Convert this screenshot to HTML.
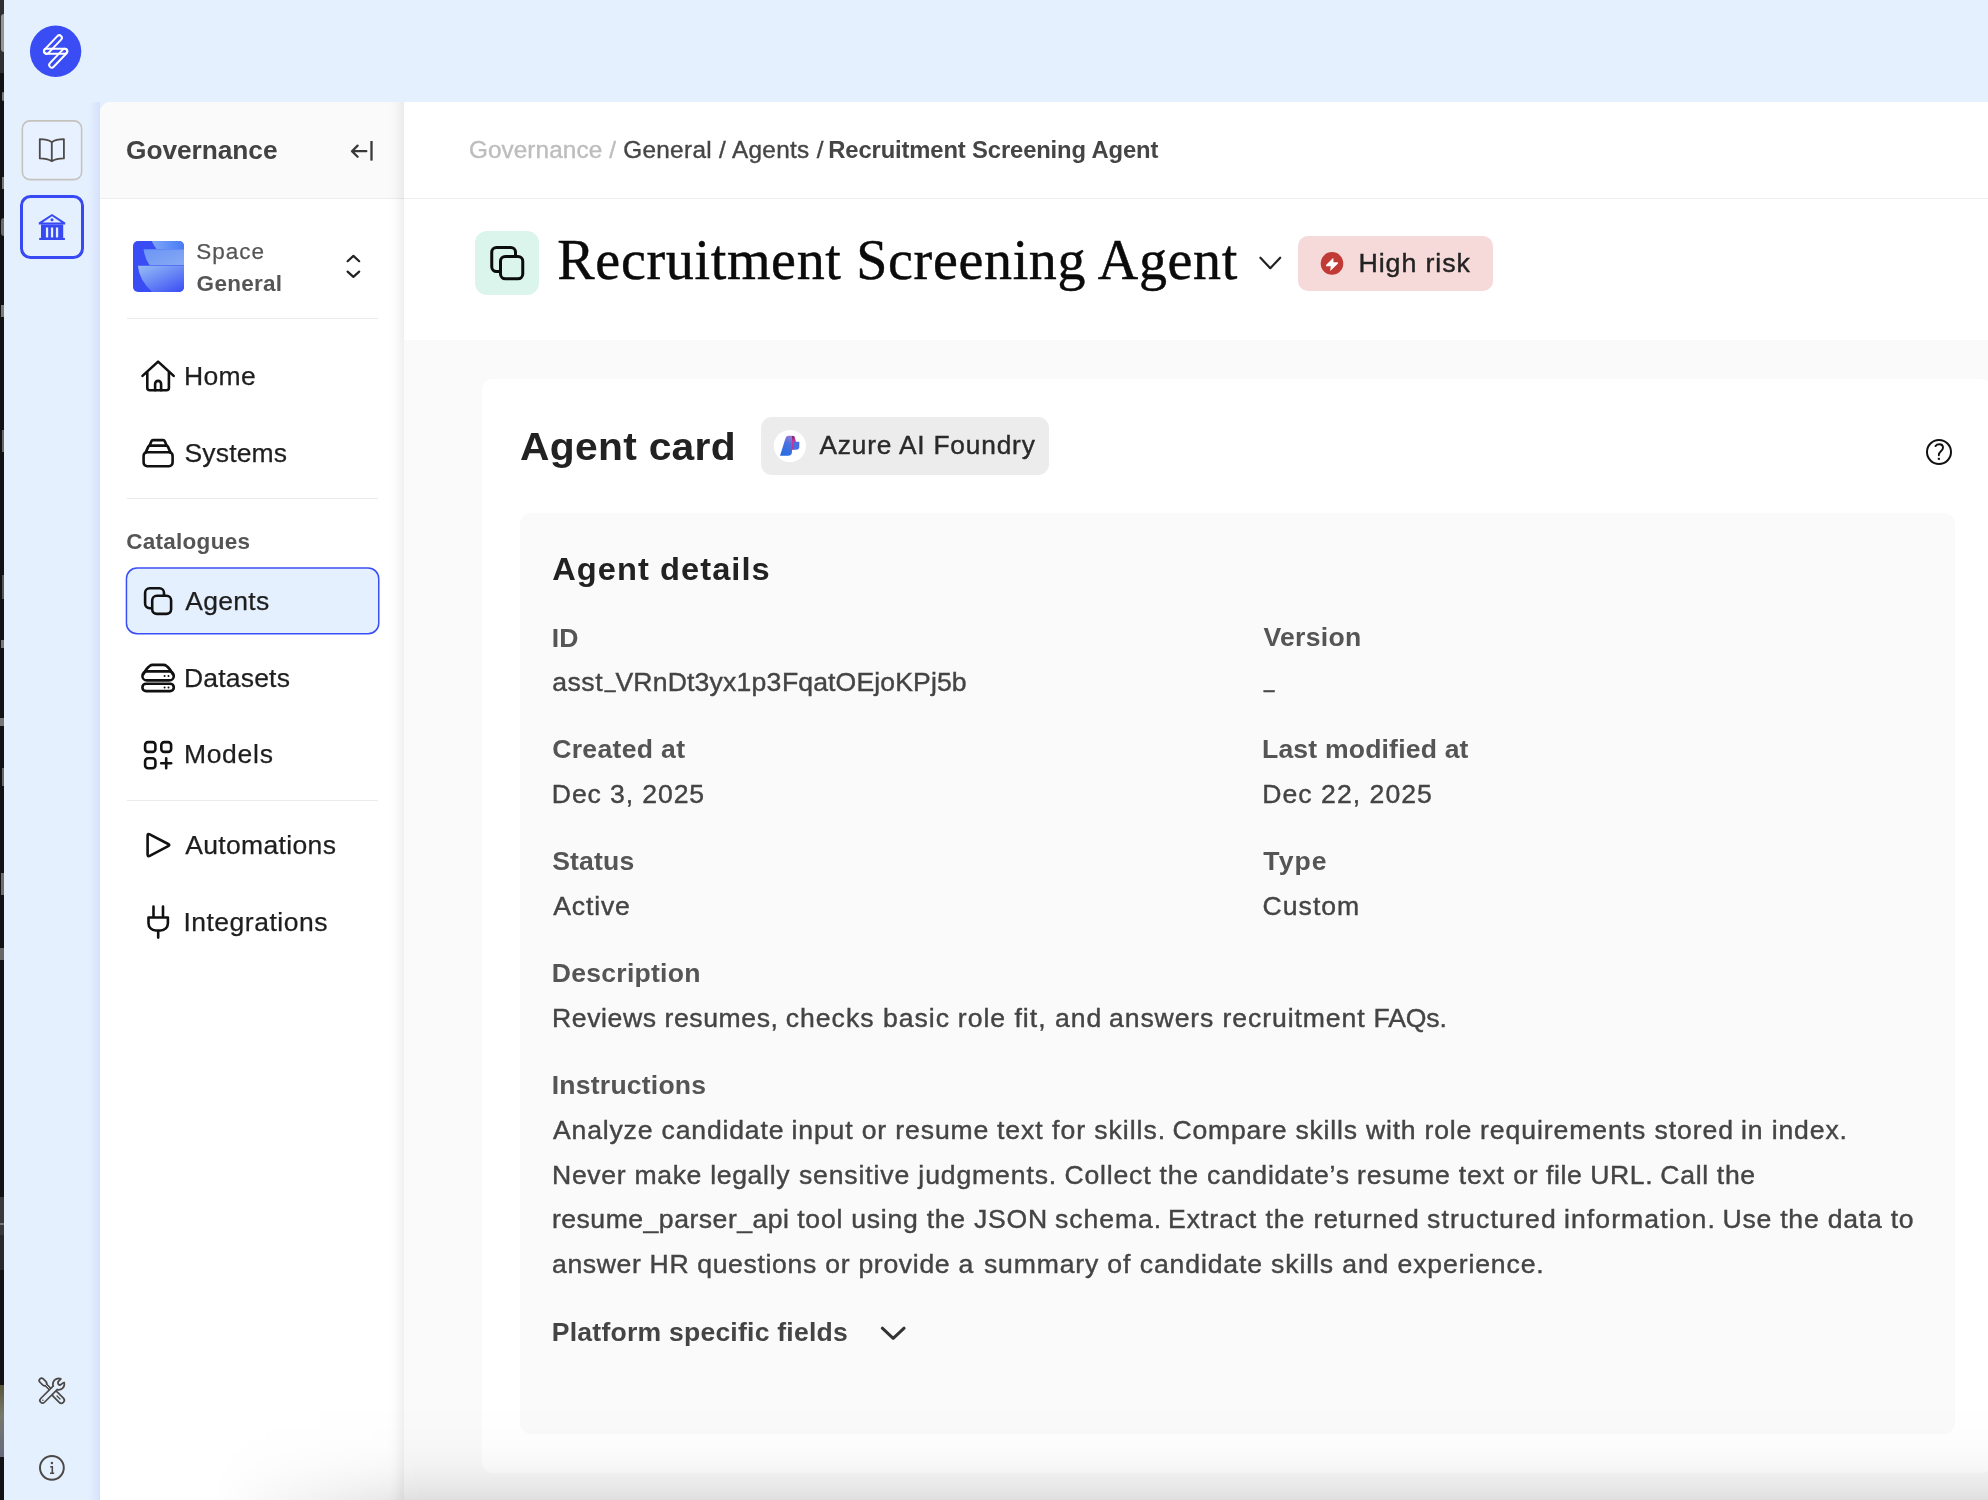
<!DOCTYPE html>
<html lang="en">
<head>
<meta charset="utf-8">
<title>Recruitment Screening Agent</title>
<style>
*{box-sizing:border-box;margin:0;padding:0}
html,body{width:1988px;height:1500px;overflow:hidden}
body{position:relative;background:#e5f0ff;font-family:"Liberation Sans",Arial,sans-serif;color:#444}
.a{position:absolute}
.t{position:absolute;white-space:nowrap;line-height:1;transform-origin:0 0;will-change:transform}
#strip{left:0;top:0;width:4px;height:1500px;background:#121214;overflow:hidden}
#strip i{position:absolute;display:block}
#rb1{left:22px;top:120.5px;width:60px;height:59.5px;border-radius:8px;background:#e7f1ff}
#rb2{left:20px;top:194.8px;width:64px;height:64px;border:3.2px solid #3649f3;border-radius:10.5px}
#pshadow{left:87px;top:102px;width:13px;height:1400px;background:linear-gradient(to right,rgba(116,133,235,0),rgba(116,133,235,.04) 40%,rgba(116,133,235,.14))}
#panel{left:100px;top:102px;width:1900px;height:1420px;background:#fff;border-top-left-radius:11px}
#sbhead{left:100px;top:102px;width:304px;height:97px;background:#fafafa;border-top-left-radius:11px;border-bottom:1px solid #ededed}
#mclip{left:364px;top:102px;width:1640px;height:1420px;overflow:hidden}
#main{left:40px;top:-20px;width:1600px;height:1460px;background:#fafafa;box-shadow:-2px 0 14px rgba(0,0,0,.10)}
#mainhead{left:404px;top:102px;width:1600px;height:237.5px;background:#fff}
#mhline{left:404px;top:198px;width:1600px;height:1px;background:#ededed}
.hr{position:absolute;height:1px;background:#ebebeb;left:127px;width:251px}
#sel{left:126px;top:567.6px;width:253.2px;height:66.6px;background:#e5f0ff;border-radius:11px}
#ticon{left:475px;top:230.8px;width:64.3px;height:64.4px;background:#dbf5ec;border-radius:12px}
#risk{left:1298px;top:236px;width:195px;height:55px;background:#f6dada;border-radius:10px}
#card{left:482px;top:379px;width:1510px;height:1094px;background:#fff;border-radius:11px}
#azure{left:761px;top:417px;width:288px;height:57.5px;background:#ececec;border-radius:11px}
#inner{left:520px;top:513px;width:1434.5px;height:920.5px;background:#fafafa;border-radius:11px}
#bot{left:100px;top:1380px;width:1900px;height:120px;background:linear-gradient(to bottom,rgba(0,0,0,0) 15%,rgba(0,0,0,.004) 37%,rgba(0,0,0,.012) 56%,rgba(0,0,0,.03) 72.5%,rgba(0,0,0,.044) 77.5%,rgba(0,0,0,.072) 89%,rgba(0,0,0,.106) 100%);-webkit-mask-image:linear-gradient(to right,rgba(0,0,0,0) 6%,#000 17%);mask-image:linear-gradient(to right,rgba(0,0,0,0) 6%,#000 17%)}
svg{position:absolute;left:0;top:0}
</style>
</head>
<body>
<div class="a" id="strip">
<i style="left:0;top:0;width:4px;height:73px;background:#2f2f31"></i>
<i style="left:1px;top:14px;width:3px;height:38px;background:#949494;border-radius:3px 0 0 3px"></i>
<i style="left:2px;top:92px;width:2px;height:9px;background:#777;border-radius:2px"></i>
<i style="left:2px;top:177px;width:2px;height:12px;background:#777"></i>
<i style="left:1px;top:218px;width:3px;height:18px;background:#6a6a6a;border-radius:3px 0 0 3px"></i>
<i style="left:1px;top:305px;width:3px;height:12px;background:#7a7a7a"></i>
<i style="left:2px;top:430px;width:2px;height:22px;background:#666"></i>
<i style="left:2px;top:575px;width:2px;height:24px;background:#555"></i>
<i style="left:1px;top:640px;width:3px;height:8px;background:#777"></i>
<i style="left:0;top:718px;width:4px;height:8px;background:#777"></i>
<i style="left:2px;top:768px;width:2px;height:18px;background:#666"></i>
<i style="left:1px;top:873px;width:3px;height:22px;background:#6e6e6e"></i>
<i style="left:0;top:948px;width:4px;height:12px;background:#666"></i>
<i style="left:0;top:1197px;width:4px;height:38px;background:#39393b"></i>
<i style="left:0;top:1223px;width:4px;height:2px;background:#777"></i>
<i style="left:0;top:1235px;width:4px;height:35px;background:#28282a"></i>
<i style="left:0;top:1385px;width:4px;height:72px;background:linear-gradient(#55553a,#77776a 40%,#666a80)"></i>
</div>
<div class="a" id="rb1"></div>
<div class="a" id="rb2"></div>
<div class="a" id="pshadow"></div>
<div class="a" id="panel"></div>
<div class="a" id="sbhead"></div>
<div class="a" id="mclip"><div class="a" id="main"></div></div>
<div class="a" id="mainhead"></div>
<div class="a" id="mhline"></div>
<div class="hr" style="top:318px"></div>
<div class="hr" style="top:498px"></div>
<div class="hr" style="top:800px"></div>
<div class="a" id="sel"></div>
<div class="a" id="ticon"></div>
<div class="a" id="risk"></div>
<div class="a" id="card"></div>
<div class="a" id="azure"></div>
<div class="a" id="inner"></div>
<div class="t" id="gov" style="left:126px;padding-left:0.1px;top:136.9px;font-size:26.3px;color:#424242;letter-spacing:-0.063px;font-weight:700">Governance</div>
<div class="t" id="space" style="left:196px;padding-left:0.3px;top:240.6px;font-size:22.5px;color:#555;letter-spacing:0.96px;-webkit-text-stroke:0.25px #555">Space</div>
<div class="t" id="general" style="left:196px;padding-left:0.61px;top:272.8px;font-size:22.5px;color:#555;letter-spacing:0.274px;font-weight:700">General</div>
<div class="t" id="n-home" style="left:183px;padding-left:0.89px;top:363.0px;font-size:26.5px;color:#1e1e1e;letter-spacing:0.417px;-webkit-text-stroke:0.25px #1e1e1e">Home</div>
<div class="t" id="n-sys" style="left:184px;padding-left:0.47px;top:439.9px;font-size:26.5px;color:#1e1e1e;letter-spacing:0.168px;-webkit-text-stroke:0.25px #1e1e1e">Systems</div>
<div class="t" id="cat" style="left:126px;padding-left:0.32px;top:530.9px;font-size:22.5px;color:#555;letter-spacing:0.258px;font-weight:700">Catalogues</div>
<div class="t" id="n-ag" style="left:185px;padding-left:0.15px;top:588.0px;font-size:26.5px;color:#1e1e1e;letter-spacing:0.336px;-webkit-text-stroke:0.25px #1e1e1e">Agents</div>
<div class="t" id="n-ds" style="left:183px;padding-left:0.89px;top:664.8px;font-size:26.5px;color:#1e1e1e;letter-spacing:0.206px;-webkit-text-stroke:0.25px #1e1e1e">Datasets</div>
<div class="t" id="n-md" style="left:183px;padding-left:0.89px;top:741.0px;font-size:26.5px;color:#1e1e1e;letter-spacing:0.718px;-webkit-text-stroke:0.25px #1e1e1e">Models</div>
<div class="t" id="n-au" style="left:185px;padding-left:0.15px;top:831.9px;font-size:26.5px;color:#1e1e1e;letter-spacing:0.344px;-webkit-text-stroke:0.25px #1e1e1e">Automations</div>
<div class="t" id="n-in" style="left:183px;padding-left:0.39px;top:909.0px;font-size:26.5px;color:#1e1e1e;letter-spacing:0.51px;-webkit-text-stroke:0.25px #1e1e1e">Integrations</div>
<div class="t" id="bc1" style="left:468px;padding-left:0.9px;top:138.3px;font-size:24.3px;color:#bdbdbd;letter-spacing:0.102px;-webkit-text-stroke:0.4px #bdbdbd">Governance /</div>
<div class="t" id="bc2" style="left:623px;padding-left:0.2px;top:138.3px;font-size:24.3px;color:#454545;letter-spacing:0.336px;-webkit-text-stroke:0.4px #454545">General / Agents /</div>
<div class="t" id="bc3" style="left:828px;padding-left:0.31px;top:138.3px;font-size:23.8px;color:#454545;letter-spacing:-0.139px;font-weight:700">Recruitment Screening Agent</div>
<div class="t" id="title" style="left:557px;padding-left:0.35px;top:231.71px;font-size:56px;color:#0b0b0b;letter-spacing:0.674px;-webkit-text-stroke:0.45px #0b0b0b;font-family:'Liberation Serif','Times New Roman',serif">Recruitment Screening Agent</div>
<div class="t" id="risktxt" style="left:1358px;padding-left:0.48px;top:249.6px;font-size:26px;color:#222;letter-spacing:0.879px;transform:scaleX(1.03);-webkit-text-stroke:0.4px #222">High risk</div>
<div class="t" id="acard" style="left:520px;padding-left:0.08px;top:428.4px;font-size:38.5px;color:#222;letter-spacing:0.25px;transform:scaleX(1.06);font-weight:700">Agent card</div>
<div class="t" id="azuretxt" style="left:819px;padding-left:0.46px;top:433.3px;font-size:25.5px;color:#2a2a2a;letter-spacing:0.801px;transform:scaleX(1.03);-webkit-text-stroke:0.4px #2a2a2a">Azure AI Foundry</div>
<div class="t" id="adet" style="left:552px;padding-left:0.14px;top:554.71px;font-size:30.8px;color:#222;letter-spacing:0.994px;transform:scaleX(1.06);font-weight:700">Agent details</div>
<div class="t" id="l-id" style="left:551px;padding-left:0.85px;top:625.6px;font-size:25.8px;color:#555;letter-spacing:-0.076px;transform:scaleX(1.03);font-weight:700">ID</div>
<div class="t" id="v-ida" style="left:552px;padding-left:0.35px;top:669.5px;font-size:25.8px;color:#444;letter-spacing:0.461px;transform:scaleX(1.03);-webkit-text-stroke:0.4px #444">asst</div>
<div class="t" id="v-idu" style="left:604px;padding-left:0.98px;top:666.3px;font-size:25.8px;color:#444;letter-spacing:0.0px;transform:scaleX(0.745);-webkit-text-stroke:0.4px #444">_</div>
<div class="t" id="v-idb" style="left:615px;padding-left:0.46px;top:669.5px;font-size:25.8px;color:#444;letter-spacing:0.172px;transform:scaleX(1.03);-webkit-text-stroke:0.4px #444">VRnDt3yx1p3</div>
<div class="t" id="v-idc" style="left:781px;padding-left:0.92px;top:669.5px;font-size:25.8px;color:#444;letter-spacing:0.126px;transform:scaleX(1.03);-webkit-text-stroke:0.4px #444">FqatOEjoKPj5b</div>
<div class="t" id="l-ver" style="left:1263px;padding-left:0.48px;top:625.4px;font-size:25.8px;color:#555;letter-spacing:0.267px;transform:scaleX(1.03);font-weight:700">Version</div>
<div class="t" id="l-cr" style="left:552px;padding-left:0.18px;top:737.0px;font-size:25.8px;color:#555;letter-spacing:0.315px;transform:scaleX(1.03);font-weight:700">Created at</div>
<div class="t" id="v-cr" style="left:551px;padding-left:0.84px;top:781.5px;font-size:25.8px;color:#444;letter-spacing:0.873px;transform:scaleX(1.03);-webkit-text-stroke:0.4px #444">Dec 3, 2025</div>
<div class="t" id="l-lm" style="left:1262px;padding-left:0.0px;top:737.0px;font-size:25.8px;color:#555;letter-spacing:0.176px;transform:scaleX(1.03);font-weight:700">Last modified at</div>
<div class="t" id="v-lm" style="left:1262px;padding-left:0.28px;top:781.71px;font-size:25.8px;color:#444;letter-spacing:1.014px;transform:scaleX(1.03);-webkit-text-stroke:0.4px #444">Dec 22, 2025</div>
<div class="t" id="l-st" style="left:552px;padding-left:0.17px;top:848.71px;font-size:25.8px;color:#555;letter-spacing:0.158px;transform:scaleX(1.03);font-weight:700">Status</div>
<div class="t" id="v-st" style="left:553px;padding-left:0.22px;top:893.5px;font-size:25.8px;color:#444;letter-spacing:0.831px;transform:scaleX(1.03);-webkit-text-stroke:0.4px #444">Active</div>
<div class="t" id="l-ty" style="left:1263px;padding-left:0.33px;top:848.8px;font-size:25.8px;color:#555;letter-spacing:1.018px;transform:scaleX(1.03);font-weight:700">Type</div>
<div class="t" id="v-ty" style="left:1262px;padding-left:0.56px;top:893.71px;font-size:25.8px;color:#444;letter-spacing:0.999px;transform:scaleX(1.03);-webkit-text-stroke:0.4px #444">Custom</div>
<div class="t" id="l-de" style="left:551px;padding-left:0.77px;top:960.71px;font-size:25.8px;color:#555;letter-spacing:0.241px;transform:scaleX(1.03);font-weight:700">Description</div>
<div class="t" id="l-in" style="left:551px;padding-left:0.77px;top:1072.9px;font-size:25.8px;color:#555;letter-spacing:0.197px;transform:scaleX(1.03);font-weight:700">Instructions</div>
<div class="t" id="v-dea" style="left:552px;padding-left:0.05px;top:1005.71px;font-size:25.8px;color:#444;letter-spacing:0.571px;transform:scaleX(1.03);-webkit-text-stroke:0.4px #444">Reviews resumes,</div>
<div class="t" id="v-deb" style="left:785px;padding-left:0.63px;top:1005.71px;font-size:25.8px;color:#444;letter-spacing:0.998px;transform:scaleX(1.03);-webkit-text-stroke:0.4px #444">checks basic</div>
<div class="t" id="v-dec" style="left:957px;padding-left:0.85px;top:1005.71px;font-size:25.8px;color:#444;letter-spacing:0.96px;transform:scaleX(1.03);-webkit-text-stroke:0.4px #444">role fit, and</div>
<div class="t" id="v-ded" style="left:1109px;padding-left:0.02px;top:1005.71px;font-size:25.8px;color:#444;letter-spacing:0.878px;transform:scaleX(1.03);-webkit-text-stroke:0.4px #444">answers recruitment</div>
<div class="t" id="v-dee" style="left:1373px;padding-left:0.57px;top:1005.71px;font-size:25.8px;color:#444;letter-spacing:-0.152px;transform:scaleX(1.03);-webkit-text-stroke:0.4px #444">FAQs.</div>
<div class="t" id="v-i1a" style="left:553px;padding-left:0.0px;top:1117.71px;font-size:25.8px;color:#444;letter-spacing:0.807px;transform:scaleX(1.03);-webkit-text-stroke:0.4px #444">Analyze candidate</div>
<div class="t" id="v-i1b" style="left:791px;padding-left:0.48px;top:1117.71px;font-size:25.8px;color:#444;letter-spacing:0.848px;transform:scaleX(1.03);-webkit-text-stroke:0.4px #444">input or resume</div>
<div class="t" id="v-i1c" style="left:997px;padding-left:0.0px;top:1117.71px;font-size:25.8px;color:#444;letter-spacing:0.939px;transform:scaleX(1.03);-webkit-text-stroke:0.4px #444">text for skills.</div>
<div class="t" id="v-i1d" style="left:1172px;padding-left:0.4px;top:1117.71px;font-size:25.8px;color:#444;letter-spacing:0.774px;transform:scaleX(1.03);-webkit-text-stroke:0.4px #444">Compare skills with role</div>
<div class="t" id="v-i1e" style="left:1480px;padding-left:0.08px;top:1117.71px;font-size:25.8px;color:#444;letter-spacing:0.899px;transform:scaleX(1.03);-webkit-text-stroke:0.4px #444">requirements stored</div>
<div class="t" id="v-i1f" style="left:1740px;padding-left:0.93px;top:1117.71px;font-size:25.8px;color:#444;letter-spacing:0.856px;transform:scaleX(1.03);-webkit-text-stroke:0.4px #444">in index.</div>
<div class="t" id="v-i2a" style="left:552px;padding-left:0.05px;top:1162.6px;font-size:25.8px;color:#444;letter-spacing:0.659px;transform:scaleX(1.03);-webkit-text-stroke:0.4px #444">Never make legally</div>
<div class="t" id="v-i2b" style="left:798px;padding-left:0.89px;top:1162.6px;font-size:25.8px;color:#444;letter-spacing:0.845px;transform:scaleX(1.03);-webkit-text-stroke:0.4px #444">sensitive judgments.</div>
<div class="t" id="v-i2c" style="left:1064px;padding-left:0.48px;top:1162.6px;font-size:25.8px;color:#444;letter-spacing:0.782px;transform:scaleX(1.03);-webkit-text-stroke:0.4px #444">Collect the candidate’s</div>
<div class="t" id="v-i2d" style="left:1357px;padding-left:0.08px;top:1162.6px;font-size:25.8px;color:#444;letter-spacing:0.785px;transform:scaleX(1.03);-webkit-text-stroke:0.4px #444">resume text</div>
<div class="t" id="v-i2e" style="left:1513px;padding-left:0.33px;top:1162.6px;font-size:25.8px;color:#444;letter-spacing:0.56px;transform:scaleX(1.03);-webkit-text-stroke:0.4px #444">or file URL.</div>
<div class="t" id="v-i2f" style="left:1660px;padding-left:0.37px;top:1162.6px;font-size:25.8px;color:#444;letter-spacing:0.649px;transform:scaleX(1.03);-webkit-text-stroke:0.4px #444">Call the</div>
<div class="t" id="v-i3a" style="left:551px;padding-left:0.86px;top:1207.3px;font-size:25.8px;color:#444;letter-spacing:0.498px;transform:scaleX(1.03);-webkit-text-stroke:0.4px #444">resume_parser_api</div>
<div class="t" id="v-i3b" style="left:797px;padding-left:0.23px;top:1207.3px;font-size:25.8px;color:#444;letter-spacing:0.731px;transform:scaleX(1.03);-webkit-text-stroke:0.4px #444">tool using the JSON</div>
<div class="t" id="v-i3c" style="left:1055px;padding-left:0.0px;top:1207.3px;font-size:25.8px;color:#444;letter-spacing:0.939px;transform:scaleX(1.03);-webkit-text-stroke:0.4px #444">schema.</div>
<div class="t" id="v-i3d" style="left:1168px;padding-left:0.08px;top:1207.3px;font-size:25.8px;color:#444;letter-spacing:0.883px;transform:scaleX(1.03);-webkit-text-stroke:0.4px #444">Extract the returned</div>
<div class="t" id="v-i3e" style="left:1426px;padding-left:0.9px;top:1207.3px;font-size:25.8px;color:#444;letter-spacing:1.147px;transform:scaleX(1.03);-webkit-text-stroke:0.4px #444">structured</div>
<div class="t" id="v-i3f" style="left:1563px;padding-left:0.95px;top:1207.3px;font-size:25.8px;color:#444;letter-spacing:1.061px;transform:scaleX(1.03);-webkit-text-stroke:0.4px #444">information.</div>
<div class="t" id="v-i3g" style="left:1722px;padding-left:0.41px;top:1207.3px;font-size:25.8px;color:#444;letter-spacing:0.762px;transform:scaleX(1.03);-webkit-text-stroke:0.4px #444">Use the data to</div>
<div class="t" id="v-i4a" style="left:552px;padding-left:0.0px;top:1251.71px;font-size:25.8px;color:#444;letter-spacing:0.627px;transform:scaleX(1.03);-webkit-text-stroke:0.4px #444">answer HR questions</div>
<div class="t" id="v-i4b" style="left:825px;padding-left:0.37px;top:1251.71px;font-size:25.8px;color:#444;letter-spacing:0.66px;transform:scaleX(1.03);-webkit-text-stroke:0.4px #444">or provide a</div>
<div class="t" id="v-i4c" style="left:983px;padding-left:0.9px;top:1251.71px;font-size:25.8px;color:#444;letter-spacing:0.822px;transform:scaleX(1.03);-webkit-text-stroke:0.4px #444">summary of</div>
<div class="t" id="v-i4d" style="left:1139px;padding-left:0.8px;top:1251.71px;font-size:25.8px;color:#444;letter-spacing:0.842px;transform:scaleX(1.03);-webkit-text-stroke:0.4px #444">candidate skills</div>
<div class="t" id="v-i4e" style="left:1342px;padding-left:0.29px;top:1251.71px;font-size:25.8px;color:#444;letter-spacing:0.858px;transform:scaleX(1.03);-webkit-text-stroke:0.4px #444">and experience.</div>
<div class="t" id="l-pf" style="left:551px;padding-left:0.77px;top:1319.5px;font-size:25.8px;color:#444;letter-spacing:0.214px;transform:scaleX(1.03);font-weight:700">Platform specific fields</div>
<div class="t" id="v-ver" style="left:1263.6px;top:666px;font-size:25.2px;color:#4a4a4a;transform:scaleX(.74);-webkit-text-stroke:.5px #4a4a4a">_</div>
<svg width="1988" height="1500" viewBox="0 0 1988 1500" fill="none">
<defs>
<linearGradient id="g1" x1="0" y1="0" x2="1" y2="0"><stop offset="0" stop-color="#7fa6f8"/><stop offset="1" stop-color="#477af5"/></linearGradient>
<linearGradient id="g2" x1="0" y1="0" x2="1" y2="1"><stop offset="0" stop-color="#6a95f5"/><stop offset="1" stop-color="#88aaf4"/></linearGradient>
<linearGradient id="g3" x1="0.1" y1="0" x2="0.9" y2="1"><stop offset="0" stop-color="#93b8f6"/><stop offset=".45" stop-color="#6c8af5"/><stop offset="1" stop-color="#3a4df5"/></linearGradient>
<linearGradient id="az1" x1="0.7" y1="0" x2="0.4" y2="1"><stop offset="0" stop-color="#8d7ad8"/><stop offset=".35" stop-color="#4a72e0"/><stop offset="1" stop-color="#2b6be2"/></linearGradient>
<linearGradient id="az2" x1="0" y1="0" x2="0" y2="1"><stop offset="0" stop-color="#7a206e"/><stop offset=".4" stop-color="#c93a9a"/><stop offset="1" stop-color="#b03290"/></linearGradient>
<clipPath id="spc"><rect x="133" y="241" width="51" height="51" rx="5"/></clipPath>
</defs>

<!-- logo -->
<circle cx="55.6" cy="51.3" r="25.7" fill="#3a4df4"/>
<g stroke="#fff" stroke-width="1.95">
<rect x="41.2" y="41.9" width="23.5" height="5.2" rx="2.6" transform="rotate(-46.5 52.95 44.5)"/>
<rect x="44" y="48.8" width="23.2" height="4.9" rx="2.45"/>
<rect x="46.3" y="55.6" width="23.9" height="5.2" rx="2.6" transform="rotate(-46.5 58.25 58.2)"/>
</g>

<rect x="22.35" y="120.85" width="59.3" height="58.8" rx="7.6" stroke="#c6c2be" stroke-width="1.6"/>
<!-- book -->
<path d="M51.8 142.2C48.2 139.6 44.2 139.2 39.8 139.2V158.4C44.2 158.4 48.2 158.8 51.8 161.2C55.4 158.8 59.4 158.4 63.9 158.4V139.2C59.4 139.2 55.4 139.6 51.8 142.2ZM51.8 142.2V161" stroke="#4d4a47" stroke-width="1.8" stroke-linejoin="round"/>

<!-- bank -->
<g fill="#3649f3">
<path d="M52 213.9L65.2 222.6V224.4H38.8V222.6ZM52 216.2L42.6 222.6H61.4Z" fill-rule="evenodd"/>
<circle cx="52" cy="219.7" r="1.5"/>
<path d="M41 224.4H63.2V238H41ZM45.9 227.4V237.6H48.2V227.4ZM50.9 227.4V237.6H53.2V227.4ZM55.9 227.4V237.6H58.2V227.4Z" fill-rule="evenodd"/>
<rect x="39.2" y="237.9" width="25.7" height="2.1"/>
</g>

<!-- collapse -->
<g stroke="#383838" stroke-width="2.3" stroke-linecap="round" stroke-linejoin="round">
<path d="M352.3 151.2H366.3M357.6 145.6L352 151.2L357.6 156.8"/>
<path d="M371.5 141V160.6" stroke-linecap="butt"/>
</g>

<!-- space icon -->
<g clip-path="url(#spc)">
<rect x="133" y="241" width="51" height="51" fill="#3a4df5"/>
<path d="M151.4 240H185V249H156.5Q153 244.5 151.4 240Z" fill="url(#g1)"/>
<path d="M143.6 249.3H185V265.3H149.6Q144.6 258 143.6 249.3Z" fill="url(#g2)"/>
<path d="M137.8 265.8H185V293H153.5Q139.5 281.5 137.8 265.8Z" fill="url(#g3)"/>
</g>

<!-- chevrons up/down -->
<path d="M347.6 261.2L353.4 255.9L359.2 261.2M347.6 271.6L353.4 276.9L359.2 271.6" stroke="#222" stroke-width="2.2" stroke-linecap="round" stroke-linejoin="round"/>

<rect x="126.45" y="568.05" width="252.3" height="65.7" rx="10.6" stroke="#3b4ef5" stroke-width="1.5"/>
<!-- nav icons -->
<g stroke="#111" stroke-width="2.6" stroke-linecap="round" stroke-linejoin="round">
<!-- home -->
<path d="M142.5 375.9L158.1 361.6L173.7 375.9"/>
<path d="M147.3 372.8V387.8A2.5 2.5 0 0 0 149.8 390.3H166.4A2.5 2.5 0 0 0 168.9 387.8V372.8"/>
<path d="M155.1 390.3V383.9A3 3 0 0 1 158.1 380.9A3 3 0 0 1 161.1 383.9V390.3"/>
<!-- systems -->
<rect x="143.6" y="452.2" width="29" height="14" rx="3.6"/>
<path d="M145.6 452.6L148.3 446.6Q148.8 445.6 150 445.6H166.2Q167.4 445.6 167.9 446.6L170.6 452.6"/>
<path d="M149.6 445.4L151.4 441.2Q151.9 440.1 153.1 440.1H163.1Q164.3 440.1 164.8 441.2L166.6 445.4"/>
<!-- agents copy -->
<rect x="145.1" y="588.3" width="18.9" height="19.9" rx="4.6"/>
<rect x="152.2" y="595.8" width="18.9" height="18.1" rx="4.6" fill="#e5f0ff"/>
<!-- datasets -->
<path d="M143.3 674.5Q146.2 668.5 149.6 666Q151 664.9 152.8 664.9H163.4Q165.2 664.9 166.6 666Q170 668.5 172.9 674.5"/>
<rect x="142.4" y="671.4" width="31.4" height="9" rx="4.5"/>
<rect x="142.4" y="683.7" width="31.4" height="7.4" rx="3.7"/>
<!-- models -->
<rect x="145.1" y="742.1" width="10.3" height="9.8" rx="3"/>
<rect x="161.3" y="742.1" width="9.8" height="9.8" rx="3"/>
<rect x="145.1" y="758.3" width="10.3" height="9.9" rx="3"/>
<path d="M166.2 758.2V768.2M161.2 763.2H171.2"/>
<!-- play -->
<path d="M147.6 835.6Q147.6 833.2 149.7 834.3L168.2 844Q170.3 845.1 168.2 846.2L149.7 855.9Q147.6 857 147.6 854.6Z"/>
<!-- plug -->
<path d="M153.5 906.5V917.4M163 906.5V917.4M148.5 917.5H167.9V923.3A7.2 7.2 0 0 1 160.7 930.5H155.7A7.2 7.2 0 0 1 148.5 923.3ZM158.2 930.6V937.6"/>
</g>
<g fill="#111">
<circle cx="164.6" cy="676" r="1"/><circle cx="168.5" cy="676" r="1"/>
<circle cx="164.6" cy="687.4" r="1"/><circle cx="168.5" cy="687.4" r="1"/>
</g>

<!-- title icon -->
<g stroke="#0c0c0c" stroke-width="3" stroke-linejoin="round">
<rect x="491.75" y="247.5" width="23.75" height="24" rx="4.8"/>
<rect x="500.5" y="256.5" width="22.25" height="22.25" rx="4.8" fill="#dbf5ec"/>
</g>
<!-- title chevron -->
<path d="M1260.4 257.7L1270.3 268.2L1280.2 257.7" stroke="#222" stroke-width="2.2" stroke-linecap="round" stroke-linejoin="round"/>

<!-- risk -->
<circle cx="1332" cy="263.4" r="11.3" fill="#c23a35"/>
<path d="M1333.3 257.7L1326 265.1V266.3H1330.8L1330.2 270.9L1338 263.4L1337.8 262.3H1333.5Z" fill="#fff"/>

<!-- azure -->
<circle cx="789.9" cy="446" r="16.1" fill="#fff"/>
<path d="M792 435.8L794.4 436.3Q795 438.5 796 441.5L794 444V449.8H792Z" fill="url(#az2)"/>
<path d="M788.5 435.8H792V451.5Q792 455.8 787.8 455.8H780L785.6 438Q786.3 435.8 788.5 435.8Z" fill="url(#az1)"/>
<path d="M795.2 441.7H799.3V446.5Q799.3 449.8 796 449.8H793V444Q793 441.7 795.2 441.7Z" fill="#476fe0"/>

<!-- help -->
<circle cx="1939" cy="452" r="12" stroke="#111" stroke-width="2"/>
<path d="M1935.5 446.1C1936.4 444.8 1937.8 444.3 1939.3 444.3C1941.6 444.3 1943 445.9 1943 447.8C1943 450.9 1938.8 451.2 1938.8 455.2" stroke="#111" stroke-width="1.9" stroke-linecap="round"/>
<rect x="1937.8" y="457.8" width="2.1" height="2.1" fill="#111"/>

<!-- platform chevron -->
<path d="M882.3 1328.2L893.2 1338.4L904.1 1328.2" stroke="#333" stroke-width="3" stroke-linecap="round" stroke-linejoin="round"/>

<!-- tools -->
<g stroke-linecap="round">
<path d="M41.6 1380.6L44.3 1383.3" stroke="#4b4845" stroke-width="6.4"/>
<path d="M44 1383L56 1395" stroke="#4b4845" stroke-width="3.6" stroke-linecap="butt"/>
<path d="M55.3 1394.3L61.3 1400.3" stroke="#4b4845" stroke-width="7.6"/>
<path d="M41.6 1380.6L44.3 1383.3" stroke="#e5f0ff" stroke-width="3"/>
<path d="M44.5 1383.5L55 1394" stroke="#e5f0ff" stroke-width="0.9" stroke-linecap="butt"/>
<path d="M55.3 1394.3L61.3 1400.3" stroke="#e5f0ff" stroke-width="4.2"/>
<path d="M57 1396L60 1399" stroke="#4b4845" stroke-width="1.3"/>
<path d="M42.6 1400.4L55.5 1387.5" stroke="#4b4845" stroke-width="7"/>
<circle cx="58.6" cy="1384.2" r="6.6" fill="#4b4845"/>
<path d="M42.6 1400.4L55.5 1387.5" stroke="#e5f0ff" stroke-width="3.7"/>
<circle cx="58.6" cy="1384.2" r="4.8" fill="#e5f0ff"/>
<path d="M58.6 1384.2L66.5 1376.3" stroke="#e5f0ff" stroke-width="4.6" stroke-linecap="butt"/>
<path d="M60.9 1378.8L58 1381.9Q57.6 1384.5 59.8 1385.2L63.6 1382.6" stroke="#4b4845" stroke-width="1.7" stroke-linejoin="round"/>
<circle cx="42.9" cy="1400.2" r="0.8" fill="#4b4845"/>
</g>

<!-- info -->
<circle cx="51.9" cy="1467.8" r="11.9" stroke="#4b4845" stroke-width="2"/>
<circle cx="51.9" cy="1463" r="1.2" fill="#4b4845"/>
<path d="M50.2 1466.7H52.3V1473.2M50 1473.3H54.2" stroke="#4b4845" stroke-width="1.6"/>
</svg>
<div class="a" id="bot"></div>
</body>
</html>
